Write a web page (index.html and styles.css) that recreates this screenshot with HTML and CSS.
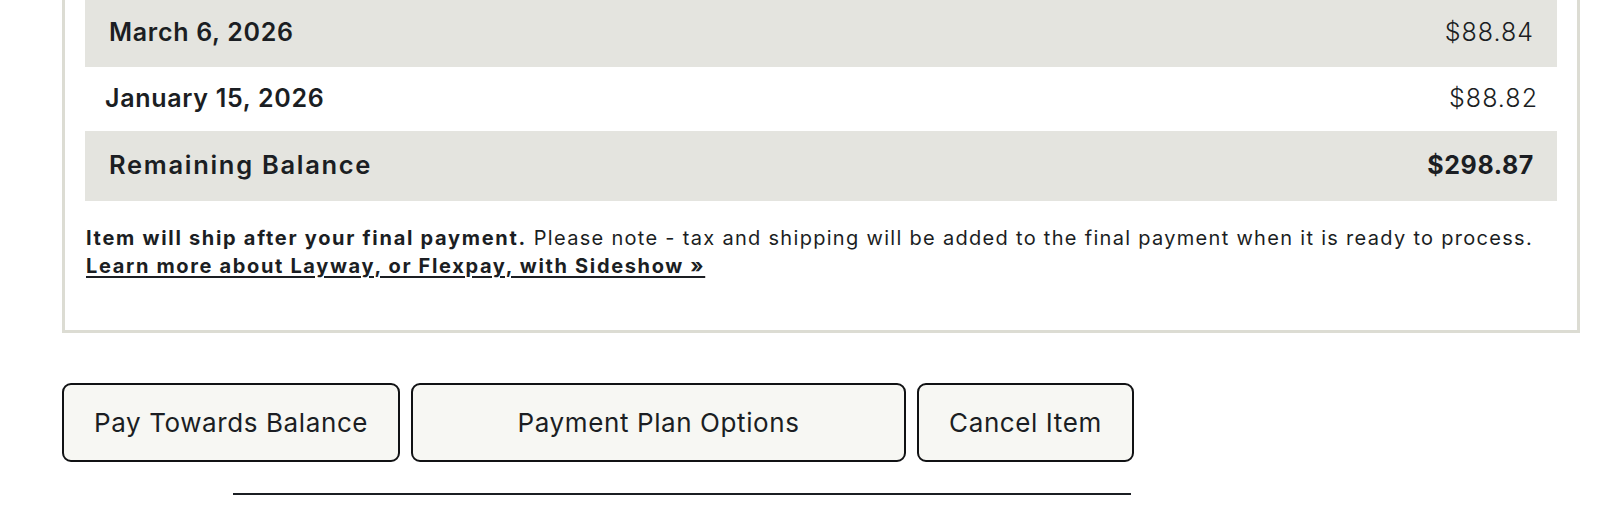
FILE: index.html
```html
<!DOCTYPE html>
<html lang="en">
<head>
<meta charset="utf-8">
<title>Layway Payments</title>
<link rel="stylesheet" href="styles.css">
</head>
<body>
<main class="page">
  <section class="plan-box">
    <div class="plan-rows">
      <div class="plan-row shaded first">
        <span class="plan-date">March 6, 2026</span>
        <span class="plan-amount">$88.84</span>
      </div>
      <div class="plan-row plain">
        <span class="plan-date">January 15, 2026</span>
        <span class="plan-amount">$88.82</span>
      </div>
      <div class="plan-row shaded total">
        <span class="plan-date label">Remaining Balance</span>
        <span class="plan-amount strong">$298.87</span>
      </div>
    </div>
    <p class="plan-note"><strong>Item will ship after your final payment.</strong> Please note - tax and shipping will be added to the final payment when it is ready to process.<br><a class="plan-link" href="#">Learn more about Layway, or Flexpay, with Sideshow »</a></p>
  </section>
  <div class="actions">
    <button class="action-btn">Pay Towards Balance</button>
    <button class="action-btn wide">Payment Plan Options</button>
    <button class="action-btn">Cancel Item</button>
  </div>
  <div class="rule"></div>
</main>
</body>
</html>
```
FILE: styles.css
```css
* { box-sizing: border-box; }
html, body { margin: 0; padding: 0; background: #ffffff; }
body {
  font-family: "Inter", "Noto Sans", sans-serif;
  color: #1b1e23;
}
.page {
  padding: 0 42px 0 62px;
}
.plan-box {
  border: 3px solid #dcdcd3;
  border-top: none;
  padding: 0 20px 50px 20px;
  background: #ffffff;
}
.plan-rows {
  display: flex;
  flex-direction: column;
}
.plan-row {
  display: flex;
  justify-content: space-between;
  align-items: center;
  font-size: 25px;
}
.plan-row.shaded {
  background: #e4e4df;
  padding: 0 23px 0 24px;
}
.plan-row.plain {
  padding: 0 19px 2px 20px;
  height: 64px;
}
.plan-row.first { height: 67px; padding-bottom: 4px; }
.plan-row.total { height: 70px; padding-bottom: 3px; }
.plan-date {
  font-weight: 600;
  letter-spacing: 0.7px;
}
.plan-date.label {
  font-size: 25.5px;
  letter-spacing: 1.7px;
}
.plan-amount {
  font-weight: 300;
  letter-spacing: 1px;
}
.plan-amount.strong {
  font-weight: 700;
  letter-spacing: 0.6px;
}
.plan-note {
  margin: 23px 0 0 1px;
  font-size: 20px;
  line-height: 28px;
  font-weight: 400;
  letter-spacing: 1.3px;
}
.plan-note strong {
  font-weight: 700;
  letter-spacing: 1.7px;
}
.plan-link {
  color: #1b1e23;
  font-weight: 700;
  letter-spacing: 1.65px;
  text-decoration: underline;
  text-underline-offset: 3px;
}
.actions {
  display: flex;
  gap: 11px;
  margin-top: 50px;
}
.action-btn {
  height: 79px;
  padding: 0 30px;
  border: 2px solid #111214;
  border-radius: 9px;
  background: #f7f7f3;
  color: #1b1e23;
  font-family: "Inter", "Noto Sans", sans-serif;
  font-size: 26px;
  font-weight: 400;
  letter-spacing: 0.6px;
}
.action-btn.wide { width: 495px; }
.rule {
  width: 898px;
  height: 2px;
  background: #1b1e23;
  margin: 31px 0 0 171px;
}
```
